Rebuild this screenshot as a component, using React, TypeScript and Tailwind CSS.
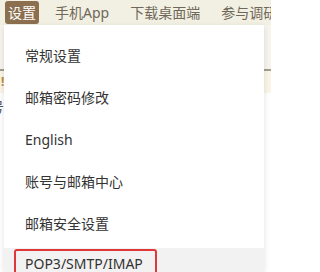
const tabs = ["手机App", "下载桌面端", "参与调研"];

const items = ["常规设置", "邮箱密码修改", "English", "账号与邮箱中心", "邮箱安全设置"];

export default function App() {
  return (
    <div className="relative w-[271px] h-[272px] overflow-hidden bg-white font-['Noto_Sans','Noto_Sans_CJK_SC',sans-serif] text-[14px]">
      {/* top nav */}
      <div className="flex h-[25px] items-center bg-[#f2efe3] pl-[5px] whitespace-nowrap">
        <div className="flex h-[23px] items-center rounded-[3px] bg-[#8c6f4e] px-[3px] text-white leading-none">设置</div>
        <div className="ml-[16px] text-[#6f6859] leading-none">{tabs[0]}</div>
        <div className="ml-[21px] text-[#6f6859] leading-none">{tabs[1]}</div>
        <div className="ml-[21px] text-[#6f6859] leading-none">{tabs[2]}</div>
      </div>

      {/* page behind the menu */}
      <div className="h-[46px] border-b-2 border-[#a49e8f] bg-[#f6f4ec]" />
      <div className="flex h-[22px] items-center bg-[#fbf5e7] pl-[1px]">
        <span className="text-[12px] font-bold text-[#c08a3a] leading-none">!</span>
      </div>
      <div className="mt-[4px] -ml-[10px] leading-[20px] text-[#555]">号</div>

      {/* dropdown */}
      <div className="absolute left-[4px] top-[25px] bottom-0 w-[260px] bg-white pt-[9px] shadow-[0_2px_6px_rgba(0,0,0,0.12)]">
        {items.map((t) => (
          <div key={t} className="flex h-[42px] items-center pl-[21px] text-[#333]">
            {t}
          </div>
        ))}
        <div className="mt-[4px] flex h-[40px] items-start bg-[#f2f2f2] pl-[21px] pt-[6px] text-[#333] leading-[20px]">
          POP3/SMTP/IMAP
        </div>
      </div>

      {/* annotation box */}
      <div className="absolute left-[14px] top-[249px] h-[30px] w-[143px] rounded-[3px] border-2 border-[#e0383a]" />
    </div>
  );
}
